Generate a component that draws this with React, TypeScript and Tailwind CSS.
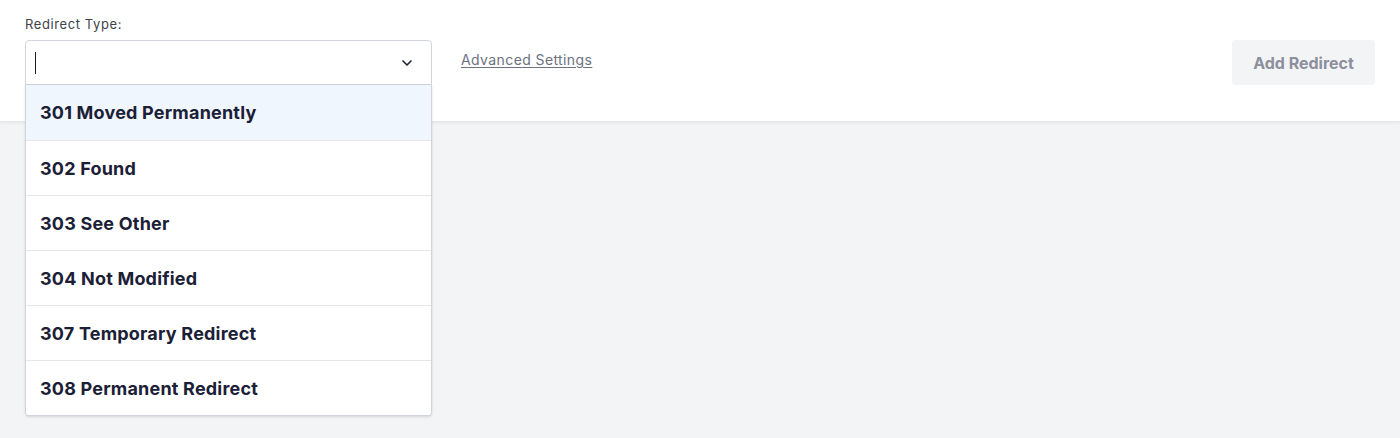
import { ChevronDown } from "lucide-react";

const options = [
  "301 Moved Permanently",
  "302 Found",
  "303 See Other",
  "304 Not Modified",
  "307 Temporary Redirect",
  "308 Permanent Redirect",
];

export default function App() {
  return (
    <div className="min-h-screen bg-[#f3f4f6] font-['Inter',sans-serif]">
      <div className="flex h-[122px] items-start border-b border-[#e5e7eb] bg-white px-[25px] pt-[15px] shadow-[0_1px_3px_rgba(0,0,0,0.06)]">
        <div className="w-[407px]">
          <label className="block text-[13px] leading-[18px] tracking-[0.6px] text-[#3c434a]">Redirect Type:</label>
          <div className="relative mt-[7px]">
            <div className="flex h-[45px] items-center justify-between rounded-t-[4px] border border-[#d1d5db] bg-white pl-[9px] pr-[16px]">
              <span className="h-[22px] w-px bg-[#1e1e1e]" />
              <ChevronDown className="h-[16px] w-[16px] text-[#1e2235]" strokeWidth={2.5} />
            </div>
            <ul className="absolute left-0 right-0 top-[45px] z-10 overflow-hidden rounded-b-[4px] border border-t-0 border-[#d1d5db] bg-white shadow-sm">
              {options.map((o, i) => (
                <li
                  key={o}
                  className={
                    "flex h-[55px] items-center px-[14px] text-[18px] font-bold tracking-[0.2px] text-[#1b2036] " +
                    (i > 0 ? "border-t border-[#e5e7eb] " : "") +
                    (i === 0 ? "bg-[#f0f6fd]" : "bg-white")
                  }
                >
                  {o}
                </li>
              ))}
            </ul>
          </div>
        </div>
        <a href="#" className="ml-[29px] mt-[36px] text-[14px] leading-[18px] tracking-[0.4px] text-[#6b7280] underline underline-offset-2">
          Advanced Settings
        </a>
        <button className="ml-auto mt-[25px] h-[45px] w-[143px] rounded-[4px] bg-[#f3f4f6] text-[16px] font-bold text-[#8c8f9c]">
          Add Redirect
        </button>
      </div>
    </div>
  );
}
